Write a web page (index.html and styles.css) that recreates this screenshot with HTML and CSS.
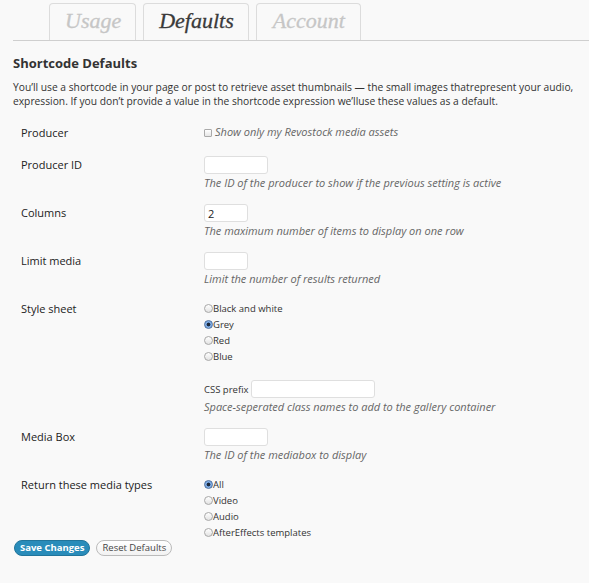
FILE: index.html
```html
<!DOCTYPE html>
<html>
<head>
<meta charset="utf-8">
<link rel="stylesheet" href="styles.css">
</head>
<body>
<div class="page">
  <nav class="tabs">
    <a class="tab">Usage</a>
    <a class="tab active">Defaults</a>
    <a class="tab">Account</a>
  </nav>
  <h3 class="title">Shortcode Defaults</h3>
  <p class="intro">You’ll use a shortcode in your page or post to retrieve asset thumbnails — the small images thatrepresent your audio,<br>expression. If you don’t provide a value in the shortcode expression we’lluse these values as a default.</p>

  <div class="form">
    <div class="row">
      <div class="label">Producer</div>
      <div class="field">
        <label class="check"><input type="checkbox" class="cb"><span class="desc">Show only my Revostock media assets</span></label>
      </div>
    </div>
    <div class="row">
      <div class="label">Producer ID</div>
      <div class="field">
        <input type="text" class="text w64">
        <div class="desc">The ID of the producer to show if the previous setting is active</div>
      </div>
    </div>
    <div class="row">
      <div class="label">Columns</div>
      <div class="field">
        <input type="text" class="text w44" value="2">
        <div class="desc">The maximum number of items to display on one row</div>
      </div>
    </div>
    <div class="row">
      <div class="label">Limit media</div>
      <div class="field">
        <input type="text" class="text w44">
        <div class="desc">Limit the number of results returned</div>
      </div>
    </div>
    <div class="row">
      <div class="label">Style sheet</div>
      <div class="field">
        <label class="opt"><input type="radio" name="ss" class="rd">Black and white</label>
        <label class="opt"><input type="radio" name="ss" class="rd" checked>Grey</label>
        <label class="opt"><input type="radio" name="ss" class="rd">Red</label>
        <label class="opt"><input type="radio" name="ss" class="rd">Blue</label>
        <div class="prefix"><span class="small">CSS prefix</span><input type="text" class="text w124"></div>
        <div class="desc">Space-seperated class names to add to the gallery container</div>
      </div>
    </div>
    <div class="row">
      <div class="label">Media Box</div>
      <div class="field">
        <input type="text" class="text w64">
        <div class="desc">The ID of the mediabox to display</div>
      </div>
    </div>
    <div class="row">
      <div class="label">Return these media types</div>
      <div class="field">
        <label class="opt"><input type="radio" name="mt" class="rd" checked>All</label>
        <label class="opt"><input type="radio" name="mt" class="rd">Video</label>
        <label class="opt"><input type="radio" name="mt" class="rd">Audio</label>
        <label class="opt"><input type="radio" name="mt" class="rd">AfterEffects templates</label>
      </div>
    </div>
  </div>
  <div class="buttons">
    <button class="btn primary">Save Changes</button>
    <button class="btn secondary">Reset Defaults</button>
  </div>
</div>
</body>
</html>
```

FILE: styles.css
```css
html, body {
  margin: 0;
  padding: 0;
  background: #f9f9f9;
  overflow: hidden;
}
body {
  font-family: "Open Sans", "DejaVu Sans", sans-serif;
  color: #333;
  font-size: 11px;
}
.page {
  padding: 3px 0 0 13px;
  width: 800px;
}
.tabs {
  display: flex;
  gap: 7px;
  padding-left: 36px;
  border-bottom: 1px solid #cfcfcf;
  height: 37px;
  width: 540px;
}
.tab {
  display: block;
  height: 37px;
  box-sizing: border-box;
  border: 1px solid #dcdcdc;
  border-bottom: none;
  border-radius: 4px 4px 0 0;
  padding: 0 15px 0 16px;
  font-family: "Liberation Serif", "DejaVu Serif", serif;
  font-style: italic;
  font-size: 22px;
  line-height: 34px;
  color: #c6c6c6;
  -webkit-text-stroke: 0.3px currentColor;
}
.tab.active {
  color: #3a3a3a;
  padding: 0 14px 0 15px;
}
.tab:first-child {
  padding: 0 14px 0 15px;
}
.title {
  margin: 13px 0 0;
  font-size: 13px;
  font-weight: bold;
  line-height: 18px;
  color: #333;
}
.intro {
  margin: 8px 0 0;
  white-space: nowrap;
  font-size: 10.25px;
  line-height: 14px;
  color: #333;
}
.form {
  padding-left: 8px;
  margin-top: 16px;
}
.row {
  display: grid;
  grid-template-columns: 183px 1fr;
  margin-bottom: 14px;
}
.label {
  line-height: 18px;
  color: #222;
}
.field {
  display: flex;
  flex-direction: column;
  align-items: flex-start;
}
.check {
  display: flex;
  align-items: center;
  height: 18px;
}
.check .desc {
  margin: 0 0 2px 3px;
}
.cb {
  appearance: none;
  width: 8px;
  height: 8px;
  margin: 0;
  border: 1px solid #aaa;
  border-radius: 1px;
  background: linear-gradient(#fff, #e6e6e6);
  box-sizing: border-box;
}
.text {
  box-sizing: border-box;
  height: 18px;
  margin: 0;
  border: 1px solid #dfdfdf;
  border-radius: 3px;
  background: #fff;
  font-family: "Open Sans", sans-serif;
  font-size: 11px;
  color: #222;
  padding: 0 3px;
}
.w64 { width: 64px; }
.w44 { width: 44px; }
.w124 { width: 124px; }
.desc {
  margin-top: 2px;
  font-style: italic;
  line-height: 14px;
  color: #666;
  font-size: 11px;
}
.opt {
  display: flex;
  align-items: center;
  height: 16px;
  font-size: 9.5px;
  color: #333;
}
.rd {
  appearance: none;
  width: 9px;
  height: 9px;
  margin: 1px 0 0 0;
  border: 1px solid #a8a8a8;
  border-radius: 50%;
  background: linear-gradient(#fff, #e2e2e2);
  box-sizing: border-box;
}
.rd:checked {
  border-color: #4a6fa0;
  background: radial-gradient(circle, #1d2a3c 0, #1d2a3c 1.6px, #78a6e0 2.2px, #9cc0ee 100%);
}
.prefix {
  display: flex;
  align-items: center;
  gap: 3px;
  margin-top: 16px;
}
.small {
  font-size: 9.5px;
  color: #333;
}
.buttons {
  display: flex;
  gap: 6px;
  margin-top: -14px;
  padding-left: 1px;
}
.btn {
  height: 16px;
  box-sizing: border-box;
  border-radius: 8px;
  padding: 0 5px;
  font-family: "Open Sans", sans-serif;
  font-size: 9.5px;
  line-height: 14px;
  white-space: nowrap;
  cursor: pointer;
}
.primary {
  background: #298cba;
  border: 1px solid #21759b;
  color: #fff;
  font-weight: bold;
}
.secondary {
  background: linear-gradient(#fff, #f2f2f2);
  border: 1px solid #bbb;
  color: #464646;
}
```
